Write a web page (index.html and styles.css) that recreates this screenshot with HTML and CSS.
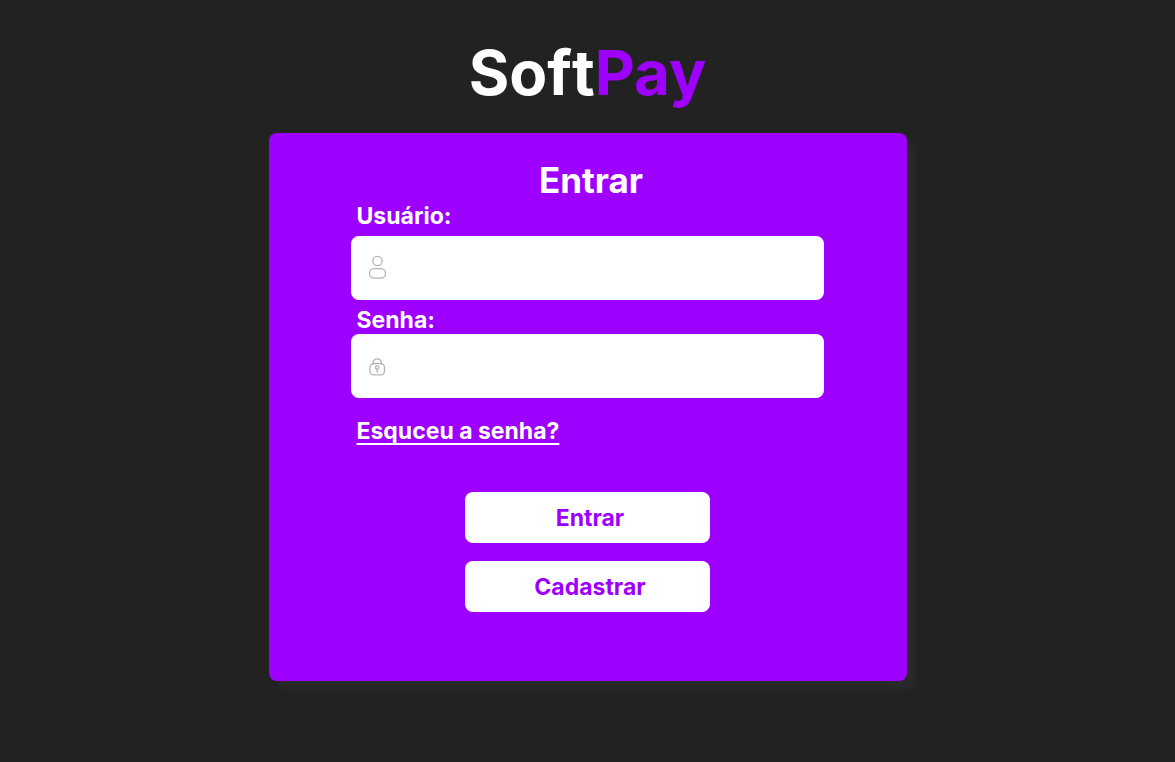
FILE: index.html
```html
<!DOCTYPE html>
<html lang="pt-BR">
<head>
<meta charset="utf-8">
<meta name="viewport" content="width=device-width, initial-scale=1">
<title>SoftPay</title>
<link rel="stylesheet" href="styles.css">
</head>
<body>
<main class="page">
  <h1 class="logo">Soft<span class="logo-accent">Pay</span></h1>
  <form class="card">
    <h2 class="title">Entrar</h2>
    <label class="label label-user" for="user">Usuário:</label>
    <div class="field">
      <svg class="icon" viewBox="0 0 20 26" aria-hidden="true">
        <circle cx="10.5" cy="6" r="4.700"/>
        <rect x="2.5" y="13.600" width="16" height="9.5" rx="4.7"/>
      </svg>
      <input class="input" id="user" type="text" autocomplete="username">
    </div>
    <label class="label label-password" for="password">Senha:</label>
    <div class="field">
      <svg class="icon" viewBox="0 0 20 26" aria-hidden="true">
        <path d="M5.800 11C6 7.700 8 5.800 10.200 5.800S14.400 7.700 14.600 11"/>
        <rect x="3" y="10.700" width="14.500" height="11.200" rx="3.800"/>
        <circle cx="10.200" cy="14.600" r="1.700"/>
        <path d="M10.200 16.300v3"/>
      </svg>
      <input class="input" id="password" type="password" autocomplete="current-password">
    </div>
    <a class="forgot" href="#">Esquceu a senha?</a>
    <div class="actions">
      <button class="button" type="submit">Entrar</button>
      <button class="button" type="button">Cadastrar</button>
    </div>
  </form>
</main>
</body>
</html>
```
FILE: styles.css
```css
* {
  box-sizing: border-box;
}

body {
  margin: 0;
  min-height: 100vh;
  background: #222222;
  color: #ffffff;
  font-family: Inter, "Liberation Sans", sans-serif;
  font-weight: 700;
}

.page {
  display: flex;
  flex-direction: column;
  align-items: center;
  gap: 22px;
  padding: 35px 16px;
}

.logo {
  margin: 0;
  font-size: 62px;
  font-kerning: none;
  line-height: 76px;
}

.logo-accent {
  color: #9e00ff;
  font-kerning: normal;
}

.card {
  display: flex;
  flex-direction: column;
  width: 100%;
  max-width: 638px;
  padding: 27px 83px 69px 82px;
  border-radius: 8px;
  background: #9e00ff;
  box-shadow: 9px 9px 4px #292929;
}

.title {
  margin: 0;
  padding-left: 8px;
  font-size: 35px;
  line-height: 40px;
  text-align: center;
}

.label {
  padding-left: 6px;
  font-size: 23px;
  line-height: 28px;
}

.label-user {
  margin: 2px 0 6px;
}

.label-password {
  margin-top: 6px;
}

.field {
  display: flex;
  align-items: center;
  height: 64px;
  padding: 0 16px;
  border-radius: 8px;
  background: #ffffff;
}

.icon {
  flex: none;
  width: 20px;
  height: 26px;
  fill: none;
  stroke: #b3b3b3;
  stroke-width: 1.3;
  stroke-linecap: round;
}

.input {
  flex: 1;
  min-width: 0;
  height: 100%;
  padding: 0 12px;
  border: 0;
  outline: 0;
  background: transparent;
  color: #222222;
  font: inherit;
  font-size: 20px;
}

.forgot {
  align-self: flex-start;
  margin: 19px 0 0 6px;
  color: #ffffff;
  font-size: 23px;
  line-height: 28px;
  text-decoration-thickness: 2px;
  text-underline-offset: 4px;
  text-decoration-skip-ink: none;
}

.actions {
  display: flex;
  flex-direction: column;
  align-items: center;
  gap: 18px;
  margin-top: 47px;
}

.button {
  width: 100%;
  max-width: 245px;
  height: 51px;
  padding: 0 0 0 6px;
  border: 0;
  border-radius: 8px;
  background: #ffffff;
  color: #9e00ff;
  font: inherit;
  font-size: 23px;
  cursor: pointer;
}
```
